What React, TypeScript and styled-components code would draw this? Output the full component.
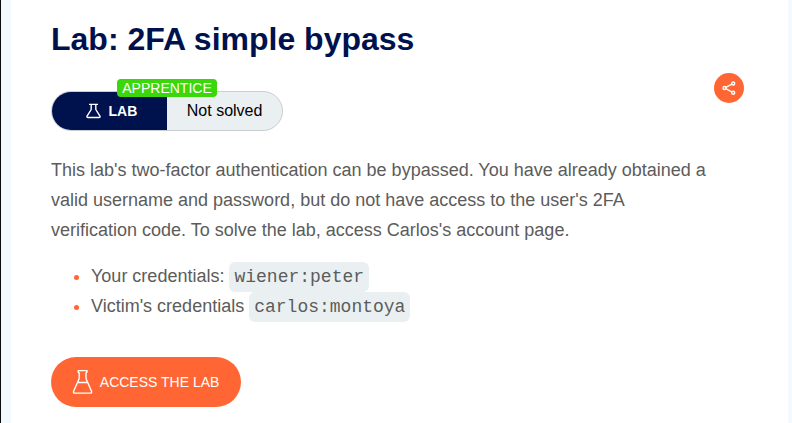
import React from "react";
import styled, { createGlobalStyle } from "styled-components";

const GlobalStyle = createGlobalStyle`
  * { box-sizing: border-box; }
  body {
    margin: 0;
    background: #f3fafd;
    font-family: "Liberation Sans", Arial, sans-serif;
    overflow: hidden;
  }
`;

const Page = styled.div`
  height: 423px;
  padding: 0 4px 0 10px;
  border-left: 1px solid #0b0b12;
`;

const Content = styled.main`
  height: 100%;
  padding: 20px 44px 0 40px;
  background: #fff;
  color: #5c5c5b;
  font-size: 18px;
  line-height: 30px;
`;

const Title = styled.h1`
  margin: 0;
  color: #00124d;
  font-size: 32px;
  font-weight: 700;
  line-height: 38px;
`;

const StatusRow = styled.div`
  display: flex;
  justify-content: space-between;
  margin-top: 15px;
  height: 58px;
`;

const Status = styled.div`
  position: relative;
  display: flex;
  width: 232px;
  height: 40px;
  margin-top: 18px;
  border: 1px solid #c8cfcf;
  border-radius: 20px;
  background: #eaf0f2;
`;

const StatusKind = styled.div`
  display: flex;
  align-items: center;
  width: 115px;
  padding-left: 33px;
  gap: 7.5px;
  border-radius: 19px 0 0 19px;
  background: #00124d;
  color: #fff;
  font-size: 14px;
  font-weight: 700;
`;

const StatusText = styled.div`
  padding-left: 19.8px;
  color: #000;
  font-size: 16px;
  line-height: 37px;
`;

const Level = styled.span`
  position: absolute;
  top: -13px;
  left: 65px;
  width: 100px;
  height: 18px;
  border-radius: 4px;
  background: #3bd60b;
  color: #fff;
  font-size: 14px;
  line-height: 18px;
  text-align: center;
`;

const ShareButton = styled.button`
  display: flex;
  align-items: center;
  justify-content: center;
  width: 30px;
  height: 30px;
  padding: 0;
  border: 0;
  border-radius: 50%;
  background: #ff6633;
`;

const Description = styled.p`
  max-width: 660px;
  margin: 24px 0 0;
`;

const Credentials = styled.ul`
  margin: 16px 0 0;
  padding-left: 40px;

  li::marker { color: #ff6633; }
`;

const Code = styled.code`
  padding: 5px;
  border-radius: 6px;
  background: #eaf0f2;
  font-family: "Liberation Mono", "Courier New", monospace;
  font-size: 18px;
  line-height: 1;
`;

const AccessButton = styled.button`
  display: flex;
  align-items: center;
  width: 190px;
  height: 50px;
  margin-top: 36px;
  padding: 0 0 0 21px;
  gap: 6.8px;
  border: 0;
  border-radius: 25px;
  background: #ff6633;
  color: #fff;
  font-family: inherit;
  font-size: 14px;
`;

const SmallFlask = () => (
  <svg width="16" height="16" viewBox="0 0 16 16" fill="none" stroke="#fff" strokeWidth="1.4" strokeLinejoin="round">
    <path d="M4 1.4h9M6.2 1.5v5L2.2 12.9q-.9 1.6 1 1.6h10.6q1.9 0 1-1.6L10.8 6.5v-5" />
  </svg>
);

const Flask = () => (
  <svg width="21" height="26" viewBox="0 0 21 26" fill="none" stroke="#fff" strokeWidth="1.4" strokeLinejoin="round">
    <path d="M6.2 1.6h8.8v1.5l-1 1v4.7q0 1 .5 2l4.9 11.2q.8 2.1-1.2 2.1H2.9q-2 0-1.2-2.1L6.7 10.8q.5-1 .5-2V4.1l-1-1zM5.3 13.5h10.4" />
  </svg>
);

const ShareIcon = () => (
  <svg width="16" height="16" viewBox="0 0 16 16" fill="none" stroke="#fff" strokeWidth="1.4">
    <path d="m4.8 7.3 6.1-3.1M4.8 8.7l6.1 3.3" />
    <circle cx="3.5" cy="8" r="1.5" />
    <circle cx="12.2" cy="3.5" r="1.5" />
    <circle cx="12.2" cy="12.7" r="1.5" />
  </svg>
);

export default function App() {
  return (
    <>
      <GlobalStyle />
      <Page>
        <Content>
          <Title>Lab: 2FA simple bypass</Title>
          <StatusRow>
            <Status>
              <StatusKind><SmallFlask />LAB</StatusKind>
              <StatusText>Not solved</StatusText>
              <Level>APPRENTICE</Level>
            </Status>
            <ShareButton aria-label="Share"><ShareIcon /></ShareButton>
          </StatusRow>
          <Description>
            This lab's two-factor authentication can be bypassed. You have already obtained a
            valid username and password, but do not have access to the user's 2FA
            verification code. To solve the lab, access Carlos's account page.
          </Description>
          <Credentials>
            <li>Your credentials: <Code>wiener:peter</Code></li>
            <li>Victim's credentials <Code>carlos:montoya</Code></li>
          </Credentials>
          <AccessButton><Flask />ACCESS THE LAB</AccessButton>
        </Content>
      </Page>
    </>
  );
}
